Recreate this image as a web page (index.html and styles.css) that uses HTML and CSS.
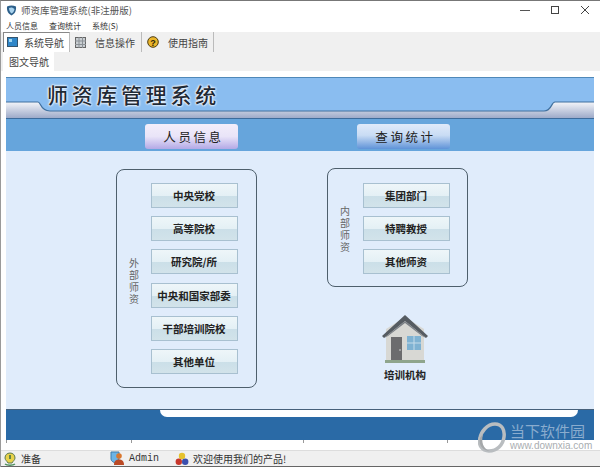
FILE: index.html
```html
<!DOCTYPE html>
<html lang="zh-CN">
<head>
  <meta charset="UTF-8" />
  <meta name="viewport" content="width=device-width, initial-scale=1.0" />
  <title>师资库管理系统</title>
  <link rel="stylesheet" href="styles.css">
</head>
<body>
  <div class="window">
    <div class="titlebar">
      <svg class="app-icon" width="11" height="11" viewBox="0 0 11 11">
        <path d="M1 1.5 C4 0 7 0 10 1.5 C10.500 6 8.500 9 5.500 10.500 C2.500 9 0.500 6 1 1.500Z" fill="#2c5f8a"/>
        <path d="M3 3 C5 2 7 2.500 8.500 4 C8 7 6.500 8 5.500 8.500 C4 7.500 3 5.500 3 3Z" fill="#a9d3ee"/>
      </svg>
      <span class="app-title">师资库管理系统(非注册版)</span>
      <div class="win-controls">
        <svg width="10" height="10" viewBox="0 0 10 10"><path d="M0 5.500H10" stroke="#555" fill="none"/></svg>
        <svg width="10" height="10" viewBox="0 0 10 10"><rect x="1.500" y="1.500" width="7" height="7" stroke="#444" fill="none"/></svg>
        <svg width="10" height="10" viewBox="0 0 10 10"><path d="M1 1L9 9M9 1L1 9" stroke="#444" fill="none"/></svg>
      </div>
    </div>

    <div class="menubar">
      <span>人员信息</span>
      <span>查询统计</span>
      <span>系统(S)</span>
    </div>

    <div class="tabs">
      <div class="tab tab-active">
        <svg width="11" height="11" viewBox="0 0 11 11"><rect x="0.500" y="0.500" width="10" height="9" fill="#2f86c8" stroke="#33546e"/><rect x="2" y="2" width="3" height="3" fill="#9fd6f2"/></svg>
        <span>系统导航</span>
      </div>
      <div class="tab">
        <svg width="11" height="11" viewBox="0 0 11 11"><rect x="0.500" y="0.500" width="10" height="10" fill="#c9ced2" stroke="#666"/><path d="M0 4H11M0 7.500H11M4 0V11M7.500 0V11" stroke="#8b9196"/></svg>
        <span>信息操作</span>
      </div>
      <div class="tab">
        <svg width="12" height="12" viewBox="0 0 12 12"><circle cx="6" cy="6" r="5.300" fill="#eab52a" stroke="#4e3d12"/><text x="6" y="9.500" text-anchor="middle" class="help-mark">?</text></svg>
        <span>使用指南</span>
      </div>
    </div>

    <div class="subtabs">
      <div class="subtab">图文导航</div>
    </div>

    <div class="page">
      <div class="banner">
        <svg class="banner-bg" width="588" height="42" viewBox="0 0 588 42">
          <defs>
            <linearGradient id="band" x1="0" y1="0" x2="0" y2="1">
              <stop offset="0" stop-color="#f4f5f9"/>
              <stop offset="1" stop-color="#98a6c6"/>
            </linearGradient>
          </defs>
          <rect width="588" height="42" fill="#8abdf0"/>
          <path d="M0 25H32C35 25 34 34 44 34H538C546 34 545 25 549 25H588V42H0Z" fill="url(#band)"/>
          <path d="M0 25H32C35 25 34 34 44 34H538C546 34 545 25 549 25H588" fill="none" stroke="#40709e" stroke-width="1.200"/>
          <path d="M0 0.500H588" stroke="#4f88b8"/>
          <path d="M0 41.500H588" stroke="#3c6c9c"/>
        </svg>
        <h1 class="banner-title">师资库管理系统</h1>
      </div>

      <div class="navstrip">
        <div class="navbtn navbtn-people">人员信息</div>
        <div class="navbtn navbtn-query">查询统计</div>
      </div>

      <div class="main">
        <div class="panel panel-outer">
          <div class="panel-label">外部师资</div>
          <div class="btn-list">
            <div class="btn">中央党校</div>
            <div class="btn">高等院校</div>
            <div class="btn">研究院/所</div>
            <div class="btn">中央和国家部委</div>
            <div class="btn">干部培训院校</div>
            <div class="btn">其他单位</div>
          </div>
        </div>

        <div class="right-col">
          <div class="panel panel-inner">
            <div class="panel-label">内部师资</div>
            <div class="btn-list">
              <div class="btn">集团部门</div>
              <div class="btn">特聘教授</div>
              <div class="btn">其他师资</div>
            </div>
          </div>
          <div class="training">
            <svg width="48" height="50" viewBox="0 0 48 50">
              <path d="M5 46V15L24 3L43 15V46Z" fill="#d8d8d4"/>
              <path d="M1 22L24 1L47 22L45 24L24 7L3 24Z" fill="#565c62"/>
              <path d="M3 24L24 7L45 24L41 22L24 9L7 22Z" fill="#7b8086"/>
              <rect x="10" y="23" width="11" height="24" fill="#6c6c6e"/>
              <circle cx="19" cy="36" r="0.800" fill="#ddd"/>
              <rect x="26" y="22" width="14" height="14" fill="#7fb2d2"/>
              <path d="M33 22V36M26 29H40" stroke="#c6dcea" stroke-width="1"/>
              <rect x="4" y="46" width="40" height="3" fill="#8fa58c"/>
            </svg>
            <div class="training-name">培训机构</div>
          </div>
        </div>
      </div>

      <div class="footer-band">
        <div class="footer-tab"></div>
      </div>
    </div>

    <div class="ticks">
      <i></i><i></i><i></i><i></i>
    </div>

    <div class="statusbar">
      <div class="status-item status-ready">
        <svg width="14" height="14" viewBox="0 0 14 14"><path d="M7 1C10 1 12 3 12 6C12 8 10 9 9 11H5C4 9 2 8 2 6C2 3 4 1 7 1Z" fill="#e8d24a" stroke="#5c7a52"/><path d="M2 12C4 13.500 10 13.500 12 12" stroke="#4f8f5f" fill="none" stroke-width="1.500"/><path d="M7 3V7" stroke="#3a6a48" stroke-width="1.500"/></svg>
        <span>准备</span>
      </div>
      <div class="status-item status-user">
        <svg width="15" height="15" viewBox="0 0 15 15"><path d="M1 1H9V8C9 10 6 11 5 12C3 11 1 10 1 8Z" fill="#6cb4e6" stroke="#3f7cab"/><circle cx="9" cy="5" r="2.800" fill="#d9772e"/><path d="M4 14C4 10 6 8.500 9 8.500C12 8.500 14 10 14 14Z" fill="#bb4a26"/></svg>
        <span class="status-admin">Admin</span>
      </div>
      <div class="status-item status-msg">
        <svg width="14" height="14" viewBox="0 0 14 14"><circle cx="7" cy="4" r="3.200" fill="#e6c22e"/><circle cx="3.800" cy="9.800" r="3.200" fill="#c7372c"/><circle cx="10.200" cy="9.800" r="3.200" fill="#3b4fae"/></svg>
        <span>欢迎使用我们的产品!</span>
      </div>
    </div>

    <div class="watermark">
      <svg width="28" height="31" viewBox="0 0 28 31"><path d="M17 2C24 2 27 8 26 15C25 23 19 29 11 29C4 29 0 23 2 16C3 10 9 2 17 2Z" fill="none" stroke="#b9bdc0" stroke-width="3.500"/><path d="M5 12C3 20 5 27 12 29C6 29 0 24 2 16Z" fill="#a5a8aa"/></svg>
      <div class="watermark-text">
        <div class="watermark-cn">当下软件园</div>
        <div class="watermark-url">www.downxia.com</div>
      </div>
    </div>
  </div>
</body>
</html>
```

FILE: styles.css
```css
* {
  box-sizing: border-box;
}
body {
  margin: 0;
  font-family: "Noto Sans CJK SC", "Liberation Sans", sans-serif;
  background-color: #fff;
  color: #333;
}
.window {
  position: relative;
  width: 600px;
  height: 467px;
  overflow: hidden;
  background: #fff;
  border-top: 1px solid #777;
  border-left: 1px solid #9a9a9a;
}

/* title + menu */
.titlebar {
  display: flex;
  align-items: center;
  height: 18px;
  padding-left: 5px;
}
.app-title {
  margin-left: 4px;
  font-size: 9.5px;
  color: #555;
}
.win-controls {
  display: flex;
  gap: 20px;
  margin-left: auto;
  margin-right: 10px;
}
.menubar {
  display: flex;
  height: 13px;
  padding-left: 5px;
  font-size: 8px;
  line-height: 13px;
  color: #333;
}
.menubar span {
  margin-right: 11px;
}

/* tabs */
.tabs {
  display: flex;
  height: 20px;
  padding-left: 2px;
  background: #f0f0f0;
}
.tab {
  display: flex;
  align-items: center;
  gap: 9px;
  width: 72px;
  padding-left: 5px;
  border-right: 1px solid #bbb;
  font-size: 10px;
  color: #444;
}
.tab-active {
  width: 67px;
  padding-left: 3px;
  gap: 6px;
  background: #fff;
  border-top: 1px solid #888;
  border-left: 1px solid #888;
}
.help-mark {
  font-family: "Liberation Sans", sans-serif;
  font-size: 9px;
  font-weight: bold;
  fill: #2d2408;
}
.subtabs {
  height: 19px;
  padding-left: 2px;
  background: #f0f0f0;
}
.subtab {
  width: 51px;
  height: 19px;
  padding-left: 6px;
  background: #fff;
  font-size: 10px;
  line-height: 19px;
  color: #444;
}

/* page content */
.page {
  width: 588px;
  margin: 6px 0 0 5px;
}
.banner {
  position: relative;
  height: 42px;
}
.banner-bg {
  display: block;
}
.banner-title {
  position: absolute;
  top: 1px;
  left: 41px;
  margin: 0;
  font-size: 21px;
  font-weight: 500;
  letter-spacing: 3.700px;
  line-height: 32px;
  color: #1f2a36;
  text-shadow: 0 0 2px #fff, 0 0 2px #fff, 0 0 3px #fff;
}
.navstrip {
  display: flex;
  height: 32px;
  padding: 5px 0 0 139px;
  gap: 119px;
  background: #66a5dc;
}
.navbtn {
  width: 93px;
  height: 25px;
  border-radius: 3px;
  font-size: 12.500px;
  line-height: 26px;
  letter-spacing: 2.600px;
  text-indent: 4px;
  text-align: center;
  color: #222;
}
.navbtn-people {
  background: linear-gradient(#f3eefa, #e9e4f8 50%, #b3a9e6);
}
.navbtn-query {
  background: linear-gradient(#dfeafa, #c9dcf4 45%, #5f93d8);
}
.main {
  display: flex;
  align-items: flex-start;
  gap: 70px;
  height: 258px;
  padding: 18px 0 0 110px;
  background: #e0ecfb;
}
.panel {
  display: flex;
  align-items: center;
  width: 141px;
  padding-left: 10.500px;
  border: 1.500px solid #4e5f6c;
  border-radius: 8px;
}
.panel-outer {
  height: 219px;
  gap: 11px;
}
.panel-inner {
  height: 119px;
  gap: 12px;
}
.panel-label {
  writing-mode: vertical-rl;
  text-orientation: upright;
  font-size: 10px;
  line-height: 12px;
  letter-spacing: 2px;
  color: #666;
}
.panel-outer .panel-label {
  margin-top: 6px;
}
.panel-inner .panel-label {
  margin-top: 4px;
}
.btn-list {
  display: flex;
  flex-direction: column;
  gap: 8.400px;
}
.panel-inner .btn-list {
  margin-top: 2px;
}
.btn {
  width: 87px;
  height: 25px;
  border: 1px solid #a8c0d0;
  background: linear-gradient(#eef6f9, #e4f0f5 50%, #cbdfe8 51%, #d2e3ea);
  font-size: 10.500px;
  font-weight: 700;
  line-height: 24px;
  text-align: center;
  color: #222;
}
.right-col {
  display: flex;
  flex-direction: column;
  margin-top: -1px;
}
.training {
  display: flex;
  flex-direction: column;
  align-items: center;
  width: 141px;
  margin-top: 27px;
  padding-left: 15px;
}
.training svg {
  display: block;
}
.training-name {
  margin-top: 3px;
  font-size: 10.500px;
  font-weight: 700;
  line-height: 16px;
  color: #222;
}
.footer-band {
  height: 31px;
  border-top: 1px solid #46607a;
  padding: 0 16px 0 154px;
  background: #2a6aa6;
}
.footer-tab {
  height: 7px;
  background: #fff;
  border-radius: 0 0 8px 8px;
}

/* bottom */
.ticks {
  display: flex;
  height: 10px;
  margin-left: 5px;
}
.ticks i {
  width: 1px;
  height: 3px;
  background: #999;
}
.ticks i:nth-child(1) { margin-right: 124px; }
.ticks i:nth-child(2) { margin-right: 171px; }
.ticks i:nth-child(3) { margin-right: 143px; }
.statusbar {
  display: flex;
  align-items: center;
  height: 17px;
  padding-left: 2px;
  background: #f0f0f0;
  border-top: 1px solid #ddd;
  border-bottom: 1px solid #666;
  font-size: 10px;
  color: #333;
}
.status-item {
  display: flex;
  align-items: center;
  gap: 4px;
}
.status-ready {
  width: 107px;
}
.status-user {
  width: 65px;
}
.status-admin {
  font-family: "Liberation Mono", monospace;
  font-size: 10px;
}
.watermark {
  position: absolute;
  left: 477px;
  top: 421px;
  display: flex;
  gap: 4px;
}
.watermark-cn {
  font-size: 15px;
  line-height: 18px;
  letter-spacing: 0;
  color: rgba(170, 195, 220, 0.75);
}
.watermark-url {
  font-family: "Liberation Sans", sans-serif;
  font-size: 10px;
  line-height: 12px;
  color: #a9adb1;
}
```
